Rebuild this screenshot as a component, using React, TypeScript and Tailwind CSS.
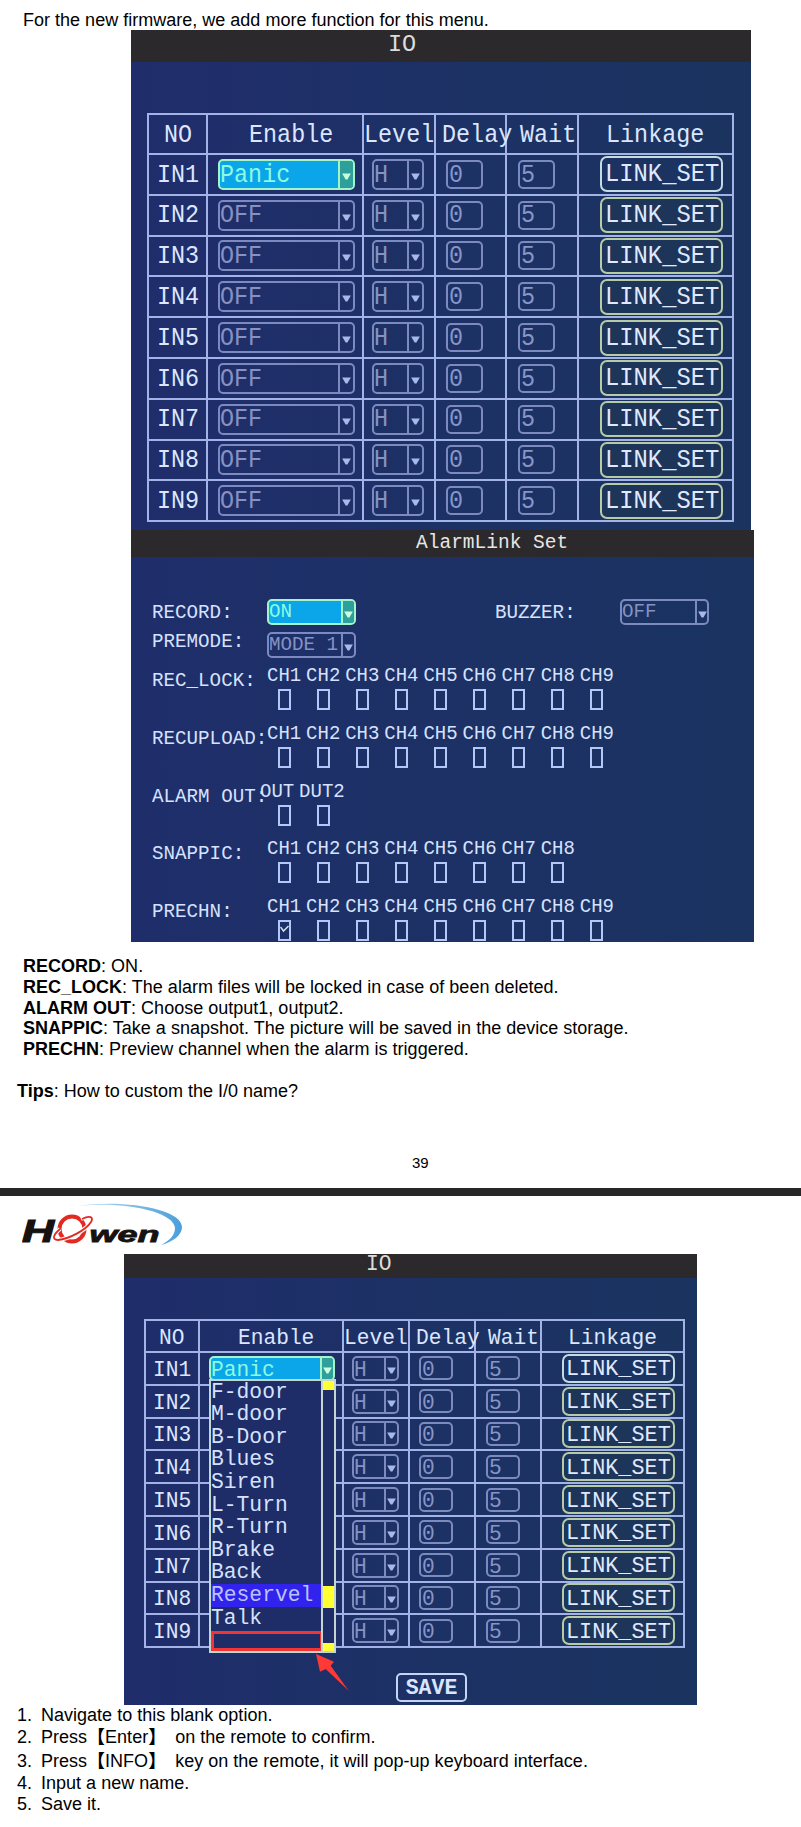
import type { ReactNode } from "react";
import clsx from "clsx";

type Size = "lg" | "sm";

const OSD = "font-['Liberation_Mono',monospace] whitespace-pre";

function Arrow() {
  return (
    <svg viewBox="0 0 10 8" className="h-[7px] w-[9px] shrink-0" aria-hidden="true">
      <path d="M0 0.5H10L6 7.5H4Z" fill="currentColor" />
    </svg>
  );
}

function Osd({ children, className }: { children: ReactNode; className?: string }) {
  return <span className={clsx(OSD, "inline-block leading-none", className)}>{children}</span>;
}

function Select({ value, className, textClass, active, arrowClass }: {
  value: string; className: string; textClass: string; active?: boolean; arrowClass: string;
}) {
  return (
    <div className={clsx("flex shrink-0 items-stretch overflow-hidden rounded-[5px] border-2", className,
      active ? "border-[#a5f3c8] bg-[#0ba5e9] text-[#8dfbe0]" : "border-[#7c8ac0] text-[#8592c2]")}>
      <div className="flex min-w-0 flex-1 items-center"><Osd className={textClass}>{value}</Osd></div>
      <div className={clsx("flex items-center justify-center border-l-2 pt-[4px]", arrowClass,
        active ? "border-[#a5f3c8] bg-[#2f9f9b] text-[#c9ffe0]" : "border-[#7c8ac0] text-[#a9b8e8]")}>
        <Arrow />
      </div>
    </div>
  );
}

const sizes = {
  lg: {
    grid: "grid w-[587px] grid-cols-[59px_156px_72px_71px_72px_155px] border-l-2 border-t-2 border-[#a3b3e8]",
    head: "h-[40px]", row: "h-[40.8px]",
    text: "text-[23.4px] translate-y-[1px] scale-y-[1.12]",
    heads: ["pl-[15px] pt-[2px]", "pl-[41px] pt-[2px]", "pl-0 pt-[2px]", "pl-[6px] pt-[2px]", "pl-[13px] pt-[2px]", "pl-[27px] pt-[2px]"],
    no: "pl-[8px]",
    enable: "ml-[10px] h-[31px] w-[137px]", level: "ml-[8px] h-[31px] w-[52px]",
    arrow: "w-[15px]",
    delay: "ml-[10px] h-[29px] w-[37px]", wait: "ml-[11px] h-[29px] w-[37px]",
    link: "ml-[21px] h-[36px] w-[123px] pl-[3px]",
    linkText: "text-[23.8px] scale-y-[1.12]",
  },
  sm: {
    grid: "grid w-[541px] grid-cols-[54px_144px_66px_66px_66px_143px] border-l-2 border-t-2 border-[#a3b3e8]",
    head: "h-[32px]", row: "h-[32.8px]",
    text: "text-[21.2px] translate-y-[1.5px]",
    heads: ["pl-[13px] pt-[1px]", "pl-[38px] pt-[1px]", "pl-0 pt-[1px]", "pl-[6px] pt-[1px]", "pl-[12px] pt-[1px]", "pl-[26px] pt-[1px]"],
    no: "pl-[7px]",
    enable: "ml-[9px] h-[25px] w-[126px]", level: "ml-[8px] h-[25px] w-[47px]",
    arrow: "w-[13px]",
    delay: "ml-[9px] h-[24px] w-[34px]", wait: "ml-[10px] h-[24px] w-[34px]",
    link: "ml-[20px] h-[29px] w-[113px] pl-[2px]",
    linkText: "text-[21.8px] translate-y-[1.5px]",
  },
};

const headings = ["NO", "Enable", "Level", "Delay", "Wait", "Linkage"];
const inputs = [1, 2, 3, 4, 5, 6, 7, 8, 9];

function IoTable({ size, open }: { size: Size; open?: boolean }) {
  const s = sizes[size];
  const cell = clsx("flex items-center border-b-2 border-r-2 border-[#a3b3e8]", s.row);
  const box = "flex shrink-0 items-center rounded-[5px] border-2 border-[#7c8ac0] pl-[1px] text-[#8895c6]";
  return (
    <div className={s.grid}>
      {headings.map((h, i) => (
        <div key={h} className={clsx("flex items-center border-b-2 border-r-2 border-[#a3b3e8] text-[#dce6ff]", s.head, s.heads[i])}>
          <Osd className={s.text}>{h}</Osd>
        </div>
      ))}
      {inputs.map((n) => (
        <div key={n} className="contents">
          <div className={clsx(cell, s.no, "text-[#dce6ff]")}><Osd className={s.text}>{`IN${n}`}</Osd></div>
          <div className={cell}>
            {(n === 1 || !open) && (
              <Select value={n === 1 ? "Panic" : "OFF"} active={n === 1} className={s.enable} textClass={s.text} arrowClass={s.arrow} />
            )}
          </div>
          <div className={cell}>
            <Select value="H" className={s.level} textClass={s.text} arrowClass={s.arrow} />
          </div>
          <div className={cell}><div className={clsx(box, s.delay)}><Osd className={s.text}>0</Osd></div></div>
          <div className={cell}><div className={clsx(box, s.wait)}><Osd className={s.text}>5</Osd></div></div>
          <div className={cell}>
            <div className={clsx("flex shrink-0 items-center rounded-[7px] border-2 text-[#e0e9ff]", s.link,
              n === 1 ? "border-[#c3dce2]" : "border-[#b7cba6] bg-[#1d3558]")}>
              <Osd className={s.linkText}>LINK_SET</Osd>
            </div>
          </div>
        </div>
      ))}
    </div>
  );
}

const alarmText = "text-[19.2px] scale-y-[1.08]";
const fieldText = "text-[19.2px] translate-y-[1px] scale-y-[1.08]";

const channels = (n: number) => Array.from({ length: n }, (_, i) => `CH${i + 1}`);
const alarmRows = [
  { label: "REC_LOCK:", items: channels(9) },
  { label: "RECUPLOAD:", items: channels(9) },
  { label: "ALARM OUT:", items: ["OUT", "DUT2"] },
  { label: "SNAPPIC:", items: channels(8) },
  { label: "PRECHN:", items: channels(9) },
];

function AlarmLink() {
  return (
    <section className="ml-[131px] h-[412px] w-[623px] overflow-hidden bg-linear-to-r from-[#1f2e6b] to-[#1a3360] text-[#d6e2ff]">
      <header className="flex h-[27px] items-center bg-[#2b292c] pl-[285px] pt-[1px] text-[#e6e6e6]">
        <Osd className="text-[19.5px]">AlarmLink Set</Osd>
      </header>
      <div className="mt-[42px] flex h-[26px] items-center pl-[21px]">
        <div className="w-[115px]"><Osd className={alarmText}>RECORD:</Osd></div>
        <Select value="ON" active className="h-[26px] w-[89px]" textClass={fieldText} arrowClass="w-[13px]" />
        <div className="ml-[139px] w-[125px]"><Osd className={alarmText}>BUZZER:</Osd></div>
        <Select value="OFF" className="h-[26px] w-[89px]" textClass={fieldText} arrowClass="w-[12px]" />
      </div>
      <div className="mt-[7px] flex h-[26px] items-center pl-[21px]">
        <div className="w-[115px] pb-[8px]"><Osd className={alarmText}>PREMODE:</Osd></div>
        <Select value="MODE 1" className="h-[26px] w-[89px]" textClass={fieldText} arrowClass="w-[13px]" />
      </div>
      <div className="mt-[7px]">
        {alarmRows.map((row, r) => (
          <div key={row.label} className="flex h-[57.8px] pl-[21px]">
            <div className="w-[115px] shrink-0 pt-[2px]"><Osd className={alarmText}>{row.label}</Osd></div>
            {row.items.map((item, i) => (
              <div key={item} className="flex w-[39.1px] shrink-0 flex-col">
                <div className={clsx("flex h-[24px] items-start", (item === "OUT" || item === "DUT2") && "-ml-[7px]")}>
                  <Osd className="translate-y-[2px] text-[19px] scale-y-[1.08]">{item}</Osd>
                </div>
                <div className="ml-[10.5px] flex h-[21px] w-[13px] justify-center border-2 border-[#b4c8f8]">
                  {r === 4 && i === 0 && (
                    <svg viewBox="0 0 9 8" className="mt-[3px] h-[8px] w-[9px] shrink-0" aria-hidden="true">
                      <path d="M0.5 2L3.5 6L8.5 1" fill="none" stroke="#d4e4ee" strokeWidth="1.5" />
                    </svg>
                  )}
                </div>
              </div>
            ))}
          </div>
        ))}
      </div>
    </section>
  );
}

const options = ["F-door", "M-door", "B-Door", "Blues", "Siren", "L-Turn", "R-Turn", "Brake", "Back", "Reservel", "Talk"];

function OptionList() {
  return (
    <div className="absolute left-[85px] top-[125px] flex h-[274px] w-[127px] border-2 border-[#c3d6d2] bg-[#1e2c67] text-[#d6e2ff]">
      <div className="flex w-[110px] shrink-0 flex-col">
        {options.map((o) => (
          <div key={o} className={clsx("flex h-[22.6px] shrink-0 items-center", o === "Reservel" && "bg-[#3122ee] text-[#b9c3ff]")}>
            <Osd className="text-[21.3px]">{o}</Osd>
          </div>
        ))}
        <div className="mt-[1px] h-[20px] w-[112px] shrink-0 border-[3px] border-[#f23434]" />
      </div>
      <div className="flex flex-1 flex-col border-l-2 border-[#c3d6d2]">
        <div className="h-[9px] bg-[#ffff31]" />
        <div className="mt-[196px] h-[22px] bg-[#ffff31]" />
        <div className="mt-auto h-[8px] bg-[#ffff31]" />
      </div>
    </div>
  );
}

function Logo() {
  return (
    <svg viewBox="0 0 164 46" className="block h-[46px] w-[164px]" role="img" aria-label="Howen">
      <defs>
        <linearGradient id="swoosh" x1="0" x2="1">
          <stop offset="0" stopColor="#b9dff0" />
          <stop offset="1" stopColor="#4a9fdc" />
        </linearGradient>
      </defs>
      <path d="M56 5C98-2 160 7 160 26C160 34 151 41 139 44C149 39 153 33 153 27C152 11 104 0 56 5Z" fill="url(#swoosh)" />
      <text x="0" y="40.5" fontFamily="Liberation Sans" fontWeight="700" fontStyle="italic" fontSize="32" textLength="32" lengthAdjust="spacingAndGlyphs" fill="#17120f" stroke="#17120f" strokeWidth="1.2">H</text>
      <text x="67.5" y="40.5" fontFamily="Liberation Sans" fontWeight="700" fontStyle="italic" fontSize="21.5" textLength="70" lengthAdjust="spacingAndGlyphs" fill="#17120f" stroke="#17120f" strokeWidth="0.8">wen</text>
      <ellipse cx="50" cy="28" rx="12.5" ry="12.5" fill="none" stroke="#e32a22" strokeWidth="4" />
      <path d="M59 18C67 14 72 15 70 20C66 28 47 38 36 39C29 39 32 33 38 28" fill="none" stroke="#ffffff" strokeWidth="4" />
      <path d="M60 18C68 14 72 16 69 21C64 29 47 38 36 39C29 39 32 33 38 28" fill="none" stroke="#e32a22" strokeWidth="1.8" />
    </svg>
  );
}

const notes = [
  ["RECORD", "ON."],
  ["REC_LOCK", "The alarm files will be locked in case of been deleted."],
  ["ALARM OUT", "Choose output1, output2."],
  ["SNAPPIC", "Take a snapshot. The picture will be saved in the device storage."],
  ["PRECHN", "Preview channel when the alarm is triggered."],
];

function Key({ name }: { name: string }) {
  return (
    <>
      <span className="font-bold">【</span>{name}<span className="mr-[4px] font-bold">】</span>
    </>
  );
}

export default function App() {
  return (
    <main className="h-[1827px] w-[801px] overflow-hidden bg-white font-['Liberation_Sans','Noto_Sans_CJK_SC',sans-serif] text-[18px] tracking-[0.01px] text-black">
      <p className="h-[30px] pl-[23px] pt-[10px] leading-[20px]">For the new firmware, we add more function for this menu.</p>

      <section className="ml-[131px] h-[500px] w-[620px] bg-linear-to-r from-[#202d6c] to-[#1a345f]">
        <header className="flex h-[32px] items-center bg-[#2c292d] pb-[3px] pl-[257px] text-[#dcdcdc]">
          <Osd className="text-[23.5px]">IO</Osd>
        </header>
        <div className="pl-[16px] pt-[51px]"><IoTable size="lg" /></div>
      </section>
      <AlarmLink />

      <div className="h-[246px] pt-[14px]">
        <div className="pl-[23px]">
          {notes.map(([k, v]) => (
            <p key={k} className="h-[20.8px] leading-[20.8px]"><b>{k}</b>: {v}</p>
          ))}
        </div>
        <p className="mt-[21px] pl-[17px] leading-[21px]"><b>Tips</b>: How to custom the I/0 name?</p>
        <p className="mt-[51px] pl-[412px] text-[15px] leading-[20px]">39</p>
      </div>
      <div className="h-[8px] bg-[#272727]" />

      <div className="h-[58px] pl-[22px] pt-[5px]"><Logo /></div>

      <section className="relative ml-[124px] h-[451px] w-[573px] bg-linear-to-r from-[#1f2d6b] to-[#1a345f]">
        <header className="flex h-[24px] items-center bg-[#2b292c] pb-[3px] pl-[242px] text-[#dcdcdc]">
          <Osd className="text-[21.3px]">IO</Osd>
        </header>
        <div className="pl-[20px] pt-[41px]"><IoTable size="sm" open /></div>
        <div className="ml-[272px] mt-[25px] flex h-[29px] w-[71px] items-center justify-center rounded-[5px] border-2 border-[#c5d4f5] text-[#dbe5ff]">
          <Osd className="translate-y-[1px] text-[21.5px] font-bold">SAVE</Osd>
        </div>
        <OptionList />
        <svg viewBox="0 0 34 38" className="absolute left-[191px] top-[399px] h-[38px] w-[34px]" aria-hidden="true">
          <path d="M1 1L19 8.7L15.7 12.7L33.7 37.7L10.7 16L5 18.7Z" fill="#ff3a36" />
        </svg>
      </section>

      <ol className="pl-[17px]">
        <li className="flex h-[21px] leading-[21px]"><span className="w-[24px]">1.</span><span>Navigate to this blank option.</span></li>
        <li className="flex h-[23px] leading-[23px]"><span className="w-[24px]">2.</span><span className="whitespace-pre">Press<Key name="Enter" /> on the remote to confirm.</span></li>
        <li className="flex h-[24px] leading-[24px]"><span className="w-[24px]">3.</span><span className="whitespace-pre">Press<Key name="INFO" /> key on the remote, it will pop-up keyboard interface.</span></li>
        <li className="flex h-[21px] leading-[21px]"><span className="w-[24px]">4.</span><span>Input a new name.</span></li>
        <li className="flex h-[21px] leading-[21px]"><span className="w-[24px]">5.</span><span>Save it.</span></li>
      </ol>
    </main>
  );
}
